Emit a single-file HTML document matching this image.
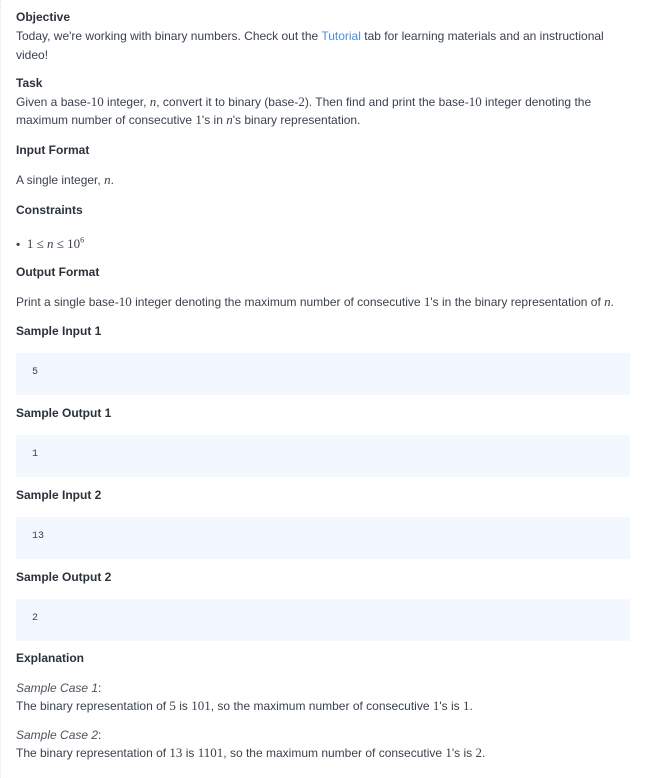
<!DOCTYPE html>
<html><head><meta charset="utf-8"><style>
body{margin:0;width:664px;height:778px;background:#fff;position:relative;overflow:hidden;font-family:"Liberation Sans",sans-serif;font-size:12px;color:#39424e;border-left:1px dotted #e4e6ea;box-sizing:border-box}
.t{position:absolute;left:15px;white-space:nowrap;line-height:16px}
b,.h{font-weight:bold;color:#2b323b}
.m{font-family:"Liberation Serif",serif;font-size:13px}
.mi{font-family:"Liberation Serif",serif;font-style:italic;font-size:13px}
.box{position:absolute;left:15px;width:614px;height:42px;background:#f3f8fe}
.box span{position:absolute;left:16px;top:14px;font-family:"Liberation Mono",monospace;font-size:10px;color:#39424e}
a{color:#4a90d9;text-decoration:none}
i{color:#4b545f}
</style></head><body>
<div class="t h" style="top:9px">Objective</div>
<div class="t" style="top:28px">Today, we're working with binary numbers. Check out the <a>Tutorial</a> tab for learning materials and an instructional</div>
<div class="t" style="top:47px">video!</div>
<div class="t h" style="top:75px">Task</div>
<div class="t" style="top:94px">Given a base-<span class="m">10</span> integer, <span class="mi">n</span>, convert it to binary (base-<span class="m">2</span>). Then find and print the base-<span class="m">10</span> integer denoting the</div>
<div class="t" style="top:112px">maximum number of consecutive <span class="m">1</span>'s in <span class="mi">n</span>'s binary representation.</div>
<div class="t h" style="top:142px">Input Format</div>
<div class="t" style="top:172px">A single integer, <span class="mi">n</span>.</div>
<div class="t h" style="top:202px">Constraints</div>
<div class="t" style="top:233px">•&nbsp;&nbsp;<span class="m">1 ≤ <i style="color:inherit">n</i> ≤ 10<sup style="font-size:8px">6</sup></span></div>
<div class="t h" style="top:264px">Output Format</div>
<div class="t" style="top:294px">Print a single base-<span class="m">10</span> integer denoting the maximum number of consecutive <span class="m">1</span>'s in the binary representation of <span class="mi">n</span>.</div>
<div class="t h" style="top:323px">Sample Input 1</div>
<div class="box" style="top:353px"><span>5</span></div>
<div class="t h" style="top:405px">Sample Output 1</div>
<div class="box" style="top:435px"><span>1</span></div>
<div class="t h" style="top:487px">Sample Input 2</div>
<div class="box" style="top:517px"><span>13</span></div>
<div class="t h" style="top:569px">Sample Output 2</div>
<div class="box" style="top:599px"><span>2</span></div>
<div class="t h" style="top:650px">Explanation</div>
<div class="t" style="top:680px"><i>Sample Case 1</i>:</div>
<div class="t" style="top:698px">The binary representation of <span class="m">5</span> is <span class="m">101</span>, so the maximum number of consecutive <span class="m">1</span>'s is <span class="m">1</span>.</div>
<div class="t" style="top:727px"><i>Sample Case 2</i>:</div>
<div class="t" style="top:745px">The binary representation of <span class="m">13</span> is <span class="m">1101</span>, so the maximum number of consecutive <span class="m">1</span>'s is <span class="m">2</span>.</div>
</body></html>
